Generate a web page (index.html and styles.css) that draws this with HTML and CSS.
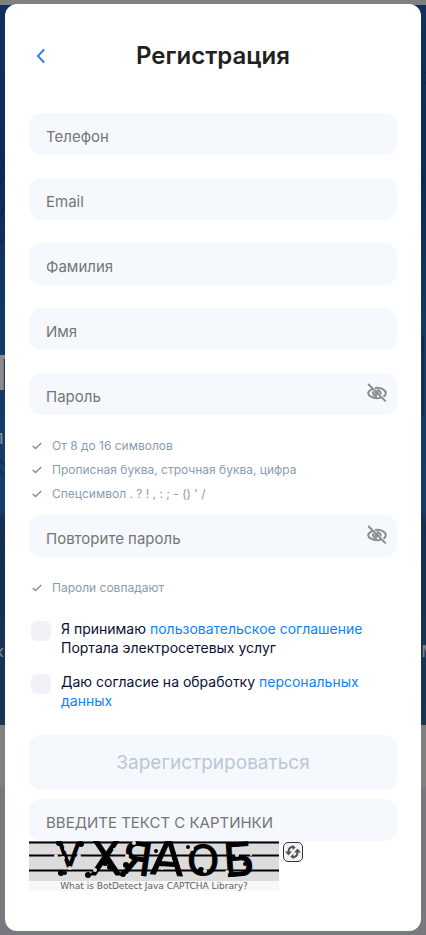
FILE: index.html
```html
<!DOCTYPE html>
<html lang="ru">
<head>
  <meta charset="UTF-8">
  <meta name="viewport" content="width=device-width, initial-scale=1.0">
  <title>Регистрация</title>
  <link rel="stylesheet" href="styles.css">
</head>
<body>
  <div class="page" aria-hidden="true">
    <div class="hero">
      <svg class="hero-lines" viewBox="0 0 426 720" preserveAspectRatio="none">
        <path d="M0 150q4 12 8 14M0 180q6-18 10-6M0 212q4-10 8-20M0 238l8-12M0 455l8 8M0 466l8 8" />
        <path d="M418 66l8 2M418 76l8 2M420 80v240M423 330v80" />
      </svg>
      <span class="hero-title">П</span>
      <span class="hero-text">п</span>
      <span class="hero-left">к</span>
      <span class="hero-right">М</span>
    </div>
    <div class="page-strip"></div>
  </div>

  <main class="modal">
    <header class="modal-header">
      <button class="back" type="button" aria-label="Назад">
        <svg width="10" height="16" viewBox="0 0 10 16"><path d="M8.2 1.3L2 8l6.2 6.7" /></svg>
      </button>
      <h1>Регистрация</h1>
    </header>

    <form class="form">
      <div class="fields">
        <input class="input" type="tel" placeholder="Телефон" aria-label="Телефон">
        <input class="input" type="email" placeholder="Email" aria-label="Email">
        <input class="input" type="text" placeholder="Фамилия" aria-label="Фамилия">
        <input class="input" type="text" placeholder="Имя" aria-label="Имя">
        <div class="password">
          <input class="input" type="password" placeholder="Пароль" aria-label="Пароль">
          <button class="eye" type="button" aria-label="Показать пароль">
            <svg width="20" height="20" viewBox="0 0 20 20">
              <path d="M5.4 5.8C3 7 1.2 8.7 1.2 10.2c0 2.6 4.3 5 8.8 5 1.4 0 2.7-.2 3.9-.6M8 4.9c.7-.1 1.3-.1 2-.1 4.6 0 8.8 2.5 8.8 5.4 0 1.3-.9 2.5-2.3 3.4" />
              <path d="M6.2 8.3c-1 2.6.6 5 3.8 5M9.8 6.9c2.7 0 4.5 2.2 3.7 4.400" />
              <circle cx="9.6" cy="10" r="1.3" />
              <path d="M1.2 1L18.7 18.4" />
            </svg>
          </button>
        </div>
      </div>

      <ul class="rules">
        <li><svg width="10" height="8" viewBox="0 0 10 8"><path d="M.7 4l2.800 2.500L9.300 1" /></svg>От 8 до 16 символов</li>
        <li><svg width="10" height="8" viewBox="0 0 10 8"><path d="M.7 4l2.800 2.500L9.300 1" /></svg>Прописная буква, строчная буква, цифра</li>
        <li><svg width="10" height="8" viewBox="0 0 10 8"><path d="M.7 4l2.800 2.500L9.300 1" /></svg>Спецсимвол . ? ! , : ; - () ' /</li>
      </ul>

      <div class="password">
        <input class="input" type="password" placeholder="Повторите пароль" aria-label="Повторите пароль">
        <button class="eye" type="button" aria-label="Показать пароль">
          <svg width="20" height="20" viewBox="0 0 20 20">
            <path d="M5.4 5.8C3 7 1.2 8.7 1.2 10.2c0 2.6 4.3 5 8.8 5 1.4 0 2.7-.2 3.9-.6M8 4.9c.7-.1 1.3-.1 2-.1 4.6 0 8.8 2.5 8.8 5.4 0 1.3-.9 2.5-2.3 3.4" />
            <path d="M6.2 8.3c-1 2.6.6 5 3.8 5M9.8 6.9c2.7 0 4.5 2.2 3.7 4.400" />
            <circle cx="9.6" cy="10" r="1.3" />
            <path d="M1.2 1L18.7 18.4" />
          </svg>
        </button>
      </div>

      <ul class="rules">
        <li><svg width="10" height="8" viewBox="0 0 10 8"><path d="M.7 4l2.800 2.500L9.300 1" /></svg>Пароли совпадают</li>
      </ul>

      <div class="agreements">
        <div class="agree">
          <input type="checkbox" id="terms">
          <label for="terms">Я принимаю <a href="#">пользовательское соглашение</a> Портала электросетевых услуг</label>
        </div>
        <div class="agree">
          <input type="checkbox" id="personal">
          <label for="personal">Даю согласие на обработку <a href="#">персональных данных</a></label>
        </div>
      </div>

      <button class="submit" type="submit" disabled>Зарегистрироваться</button>

      <input class="input" type="text" placeholder="ВВЕДИТЕ ТЕКСТ С КАРТИНКИ" aria-label="Введите текст с картинки">
      <div class="captcha">
        <div class="captcha-box">
          <svg class="captcha-image" width="250" height="40" viewBox="0 0 250 40">
            <rect width="250" height="40" fill="#dcdcdc" />
            <path d="M0 1.5h250M0 14.5h250M0 29.5h250" stroke="#000" stroke-width="2" />
            <g class="captcha-letters">
              <text x="29" y="26" font-size="33">V</text>
              <text x="60" y="34" font-size="49">X</text>
              <text x="92" y="34" font-size="45" transform="rotate(8 110 20)">Я</text>
              <text x="122" y="34" font-size="48" transform="rotate(4 138 20)">А</text>
              <text x="158" y="34" font-size="41">О</text>
              <text x="194" y="35" font-size="46" transform="rotate(-4 210 20)">Б</text>
            </g>
            <g fill="#000">
              <circle cx="32" cy="32" r="3" /><circle cx="59" cy="34" r="3" /><circle cx="36" cy="32" r="2" />
              <circle cx="76" cy="22" r="3" /><circle cx="81" cy="26" r="3" /><circle cx="94" cy="33" r="3" />
              <circle cx="97" cy="24" r="3" /><circle cx="127" cy="10" r="2" /><circle cx="159" cy="6" r="2" />
              <circle cx="172" cy="29" r="3" /><circle cx="216" cy="23" r="2" /><circle cx="30" cy="2" r="3" />
              <circle cx="52" cy="3" r="3" />
            </g>
            <g fill="#dcdcdc">
              <circle cx="37" cy="8" r="2" /><circle cx="27" cy="15" r="2" /><circle cx="34" cy="17" r="2" />
              <circle cx="50" cy="15" r="2" /><circle cx="41" cy="27" r="2" /><circle cx="60" cy="5" r="2" />
              <circle cx="66" cy="29" r="2" /><circle cx="85" cy="8" r="1" /><circle cx="98" cy="15" r="2" />
              <circle cx="105" cy="2" r="2" /><circle cx="112" cy="22" r="1" /><circle cx="133" cy="28" r="1" />
              <circle cx="163" cy="8" r="2" /><circle cx="176" cy="30" r="2" /><circle cx="190" cy="25" r="2" />
              <circle cx="208" cy="14" r="2" /><circle cx="198" cy="31" r="2" /><circle cx="222" cy="14" r="1" />
            </g>
          </svg>
          <a class="captcha-link" href="#">What is BotDetect Java CAPTCHA Library?</a>
        </div>
        <button class="reload" type="button" aria-label="Обновить картинку">
          <svg width="16" height="16" viewBox="0 0 16 16">
            <path d="M8 2.800C5 3 3.500 5 3.500 8M8 13.200c3-.2 4.500-2.200 4.500-5.200" />
            <path class="arrow" d="M0 7.500h7L3.500 11.500zM9 8.500h7L12.500 4.500zM8.500 9.800v5.400L5.300 12.500zM7.500 6.200V.8L10.700 3.500z" />
          </svg>
        </button>
      </div>
    </form>
  </main>
</body>
</html>
```
FILE: styles.css
```css
* {
  box-sizing: border-box;
}

body {
  margin: 0;
  padding: 4px 5px;
  min-height: 100vh;
  font-family: Inter, "Liberation Sans", sans-serif;
  background: #77797f;
  color: #212121;
}

button {
  padding: 0;
  border: 0;
  background: none;
  cursor: pointer;
}

/* page behind the dialog */
.page {
  position: absolute;
  inset: 0;
  border-top: 5px solid #808080;
  overflow: hidden;
  color: #8b8b8b;
}

.hero {
  position: relative;
  height: 720px;
  background: linear-gradient(#12305c, #0d2b56 25%, #143966 45%, #173c6d 70%, #162e53 72%, #173557);
}

.hero-lines {
  position: absolute;
  width: 100%;
  height: 100%;
  fill: none;
  stroke: #0a2147;
}

.hero-title,
.hero-text,
.hero-left,
.hero-right {
  position: absolute;
  left: -5px;
  line-height: 1;
}

.hero-title {
  top: 344px;
  font-size: 48px;
}

.hero-text {
  top: 422px;
  left: -8px;
  font-size: 20px;
}

.hero-left {
  top: 638px;
  font-size: 16px;
}

.hero-right {
  top: 638px;
  left: auto;
  right: -10px;
  font-size: 16px;
}

.page-strip {
  height: 62px;
  background: #808080;
}

.modal {
  position: relative;
  padding: 32px 24px 40px;
  border-radius: 12px;
  background: #fff;
}

.modal-header {
  display: grid;
  grid-template-columns: 24px 1fr 24px;
  align-items: center;
  height: 40px;
  margin-bottom: 37px;
}

.back {
  display: flex;
  justify-content: center;
  padding: 4px;
}

.back svg {
  fill: none;
  stroke: #3f7ee8;
  stroke-width: 2;
}

h1 {
  margin: 0;
  font-size: 24px;
  font-weight: 600;
  line-height: 32px;
  text-align: center;
}

.form {
  display: flex;
  flex-direction: column;
}

.fields {
  display: flex;
  flex-direction: column;
  gap: 23px;
}

.input {
  display: block;
  width: 100%;
  height: 42px;
  padding: 4px 17px 0;
  border: 0;
  border-radius: 12px;
  outline: none;
  background: #f5f9fe;
  font-family: inherit;
  font-size: 15px;
}

.input::placeholder {
  color: #757575;
  opacity: 1;
}

.password {
  position: relative;
}

.eye {
  position: absolute;
  top: 10px;
  right: 10px;
  height: 20px;
}

.eye svg {
  display: block;
  fill: none;
  stroke: #8c8c8c;
  stroke-width: 2;
}

.rules {
  margin: 19px 0 9px;
  padding: 0 3px;
  list-style: none;
  font-size: 12px;
  line-height: 24px;
  color: #8b9bb0;
}

.rules li {
  display: flex;
  align-items: center;
  gap: 10px;
}

.rules svg {
  fill: none;
  stroke: #8592a8;
  stroke-width: 1.5;
}

.agreements {
  display: flex;
  flex-direction: column;
  gap: 15px;
  margin: 10px 0 25px;
}

.agree {
  display: flex;
  gap: 10px;
  padding-left: 2px;
  font-size: 14px;
  line-height: 19px;
  color: #0b1033;
}

.agree input {
  appearance: none;
  flex: none;
  width: 20px;
  height: 20px;
  margin: 2px 0 0;
  border-radius: 6px;
  background: #f0f2f7;
}

.agree input:checked {
  background: #0c83ff;
}

.agree a {
  color: #0c83ff;
  text-decoration: none;
}

.submit {
  height: 55px;
  margin-bottom: 9px;
  border-radius: 12px;
  background: #f5f9fe;
  font-family: inherit;
  font-size: 19px;
  color: #bac7d5;
}

.captcha {
  display: flex;
  align-items: flex-start;
  gap: 4px;
}

.captcha-box {
  width: 250px;
  background: #f8f8f8;
}

.captcha-image {
  display: block;
}

.captcha-letters {
  font-family: "DejaVu Sans", sans-serif;
  stroke: #000;
}

.captcha-link {
  display: block;
  font-family: "DejaVu Sans", sans-serif;
  font-size: 9px;
  line-height: 10px;
  text-align: center;
  text-decoration: none;
  color: #616161;
}

.reload {
  width: 20px;
  height: 20px;
  margin-top: 1px;
  padding: 1px;
  border: 1px solid #333;
  border-radius: 5px;
  background: #f4f4f4;
}

.reload svg {
  display: block;
  fill: none;
  stroke: #555;
  stroke-width: 2;
}

.reload .arrow {
  fill: #555;
  stroke: none;
}
```
